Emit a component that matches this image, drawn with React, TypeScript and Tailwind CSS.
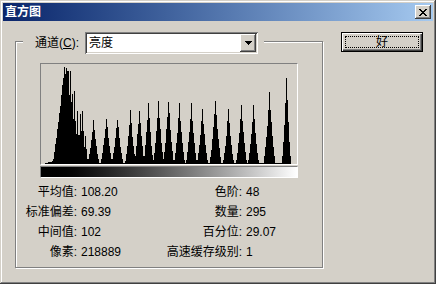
import React from 'react';

// [screen x, height, half-width] of each histogram spike
const spikes: [number, number, number][] = [
  [60, 60, 4], [62, 80, 3], [64, 100, 3], [66, 100, 3], [68, 100, 3],
  [70, 96, 3], [72, 70, 3], [74, 75, 3.5], [77, 52, 3], [80, 50, 3.5], [82, 52, 4], [85, 28, 3],
  [93, 44, 6.5], [106, 48, 6.5], [117, 47, 6.5], [130, 53, 6], [139, 57, 5.5], [148, 62, 5.5],
  [158, 62, 6], [168, 65, 6], [179, 60, 6], [191, 60, 6], [202, 56, 6], [215, 64, 6.5],
  [228, 55, 6], [241, 60, 6], [253, 58, 6], [269, 71, 6.5], [286, 89, 5],
];

const buildHist = () => {
  const out: number[] = [];
  for (let i = 0; i < 256; i++) {
    const x = i + 41;
    let v = 0;
    for (const [c, h, w] of spikes) {
      const d = Math.abs(x - c);
      if (d >= w) continue;
      v = Math.max(v, h * Math.pow(1 - d / w, 1.5));
    }
    // broad body of the dark cluster
    if (x >= 52 && x < 64) v = Math.max(v, 95 * Math.pow((x - 52) / 12, 1.15));
    if (x >= 64 && x <= 68) v = Math.max(v, 95);
    if (x > 68 && x < 84) v = Math.max(v, 80 * Math.pow((84 - x) / 16, 1.4));
    const r = (((Math.sin(i * 12.9898) * 43758.5453) % 1) + 1) % 1;
    v = v * (0.93 + 0.1 * r);
    if (x >= 43 && x <= 52) v = Math.max(v, (x - 43) * 0.3);
    if (x > 52 && x < 290) v = Math.max(v, 1);
    out.push(Math.min(100, Math.round(v)));
  }
  return out;
};

const hist = buildHist();
const histPath = (() => {
  let d = 'M0 100';
  hist.forEach((h, i) => {
    d += `V${100 - h}H${i + 1}`;
  });
  return d + 'V100Z';
})();

const raised =
  'shadow-[inset_-1px_-1px_0_#404040,inset_1px_1px_0_#fff,inset_-2px_-2px_0_#808080,inset_2px_2px_0_#d4d0c8]';

const rows = [
  ['平均值:', '108.20', '色阶:', '48'],
  ['标准偏差:', '69.39', '数量:', '295'],
  ['中间值:', '102', '百分位:', '29.07'],
  ['像素:', '218889', '高速缓存级别:', '1'],
];

export default function App() {
  return (
    <div className="w-[436px] h-[284px] bg-[#d4d0c8] p-[3px] text-[12px] text-black font-['Liberation_Sans','Noto_Sans_CJK_SC',sans-serif] shadow-[inset_-1px_-1px_0_#404040,inset_1px_1px_0_#d4d0c8,inset_-2px_-2px_0_#808080,inset_2px_2px_0_#fff]">
      {/* Title bar */}
      <div className="h-[18px] flex items-center justify-between pl-[2px] pr-[2px] bg-linear-to-r from-[#0a246a] to-[#a6caf0]">
        <span className="font-bold text-white leading-none">直方图</span>
        <div className={`w-[16px] h-[14px] bg-[#d4d0c8] flex items-center justify-center ${raised}`}>
          <svg width="8" height="7" viewBox="0 0 8 7" shapeRendering="crispEdges">
            <path
              d="M0 0h2v1h-2zM6 0h2v1h-2zM1 1h2v1h-2zM5 1h2v1h-2zM2 2h4v1h-4zM3 3h2v1h-2zM2 4h4v1h-4zM1 5h2v1h-2zM5 5h2v1h-2zM0 6h2v1h-2zM6 6h2v1h-2z"
              fill="#000"
            />
          </svg>
        </div>
      </div>

      <div className="flex items-start">
        {/* Group box */}
        <div className="relative ml-[12px] mt-[20px] w-[308px] h-[227px] border border-[#808080] shadow-[inset_1px_1px_0_#fff,1px_1px_0_#fff]">
          <div className="absolute left-[7px] top-[-10px] w-[241px] h-[22px] bg-[#d4d0c8] flex items-center justify-between pl-[12px] pr-[6px]">
            <span className="leading-none">
              通道(<span className="underline">C</span>):
            </span>
            <div className="w-[173px] h-[22px] bg-white flex items-center shadow-[inset_1px_1px_0_#808080,inset_-1px_-1px_0_#fff,inset_2px_2px_0_#404040,inset_-2px_-2px_0_#d4d0c8]">
              <span className="flex-1 pl-[4px] leading-none">亮度</span>
              <div className={`w-[16px] h-[18px] mr-[2px] bg-[#d4d0c8] flex items-center justify-center ${raised}`}>
                <svg width="7" height="4" viewBox="0 0 7 4" shapeRendering="crispEdges">
                  <path d="M0 0h7v1h-7zM1 1h5v1h-5zM2 2h3v1h-3zM3 3h1v1h-1z" fill="#000" />
                </svg>
              </div>
            </div>
          </div>

          {/* Histogram */}
          <div className="ml-[24px] mt-[21px] w-[258px]">
            <div className="h-[102px] border border-[#808080] border-r-white border-b-white">
              <svg width="256" height="100" viewBox="0 0 256 100" shapeRendering="crispEdges" className="block">
                <path d={histPath} fill="#000" />
              </svg>
            </div>
            <div className="mt-[1px] h-[12px] border border-[#808080] border-r-white border-b-white">
              <div className="h-full bg-linear-to-r from-black to-white" />
            </div>
          </div>

          {/* Stats */}
          <div className="mt-[4px] grid grid-cols-[61px_85px_80px_1fr] leading-[20px]">
            {rows.map(([l1, v1, l2, v2]) => (
              <React.Fragment key={l1}>
                <span className="text-right whitespace-nowrap">{l1}</span>
                <span className="pl-[4px]">{v1}</span>
                <span className="text-right whitespace-nowrap">{l2}</span>
                <span className="pl-[4px]">{v2}</span>
              </React.Fragment>
            ))}
          </div>
        </div>

        {/* OK button */}
        <div className="ml-[18px] mt-[11px] w-[82px] h-[20px] border border-black bg-[#d4d0c8] p-[3px] flex shadow-[inset_1px_1px_0_#fff,inset_-1px_-1px_0_#404040,inset_-2px_-2px_0_#808080]">
          <div className="flex-1 border border-dotted border-black flex items-center justify-center leading-none">
            好
          </div>
        </div>
      </div>
    </div>
  );
}
